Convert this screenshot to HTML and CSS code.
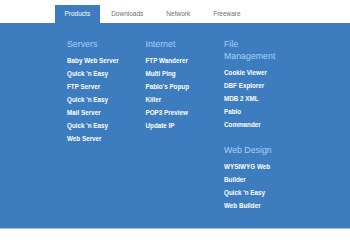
FILE: index.html
```html
<!DOCTYPE html>
<html>
<head>
  <meta charset="UTF-8">
  <title>Products menu</title>
  <link rel="stylesheet" href="styles.css">
</head>
<body>
  <nav class="tabs">
    <a class="tab active" href="#">Products</a>
    <a class="tab" href="#">Downloads</a>
    <a class="tab" href="#">Network</a>
    <a class="tab" href="#">Freeware</a>
  </nav>

  <div class="panel">
    <div class="col">
      <h2>Servers</h2>
      <ul>
        <li>Baby Web Server</li>
        <li>Quick 'n Easy</li>
        <li>FTP Server</li>
        <li>Quick 'n Easy</li>
        <li>Mail Server</li>
        <li>Quick 'n Easy</li>
        <li>Web Server</li>
      </ul>
    </div>

    <div class="col">
      <h2>Internet</h2>
      <ul>
        <li>FTP Wanderer</li>
        <li>Multi Ping</li>
        <li>Pablo's Popup</li>
        <li>Killer</li>
        <li>POP3 Preview</li>
        <li>Update IP</li>
      </ul>
    </div>

    <div class="col">
      <h2>File Management</h2>
      <ul>
        <li>Cookie Viewer</li>
        <li>DBF Explorer</li>
        <li>MDB 2 XML</li>
        <li>Pablo</li>
        <li>Commander</li>
      </ul>

      <h2 class="later">Web Design</h2>
      <ul>
        <li>WYSIWYG Web</li>
        <li>Builder</li>
        <li>Quick 'n Easy</li>
        <li>Web Builder</li>
      </ul>
    </div>
  </div>
</body>
</html>
```

FILE: styles.css
```css
body {
  margin: 0;
  background: #fff;
  font-family: "Liberation Sans", Arial, sans-serif;
}

.tabs {
  display: flex;
  padding: 5px 0 0 55px;
  height: 18px;
}

.tab {
  padding: 0 11.5px;
  line-height: 18px;
  font-size: 6.5px;
  color: #707070;
  text-decoration: none;
}

.tab.active {
  padding: 0 9.5px;
  background: #3c7cbf;
  color: #fff;
}

.panel {
  display: flex;
  height: 206px;
  padding: 15px 0 0 67px;
  box-sizing: border-box;
  background: #3c7cbf;
  border-bottom: 1px solid #9dbde0;
}

.col {
  width: 64.5px;
  padding-right: 14px;
}

h2 {
  margin: 0 0 4px;
  font-size: 8.8px;
  font-weight: normal;
  line-height: 12px;
  color: #a9d2f5;
}

h2.later {
  margin-top: 13px;
}

ul {
  margin: 0;
  padding: 0;
  list-style: none;
}

li {
  font-size: 6.3px;
  font-weight: bold;
  line-height: 13px;
  color: #fff;
  white-space: nowrap;
}
```
